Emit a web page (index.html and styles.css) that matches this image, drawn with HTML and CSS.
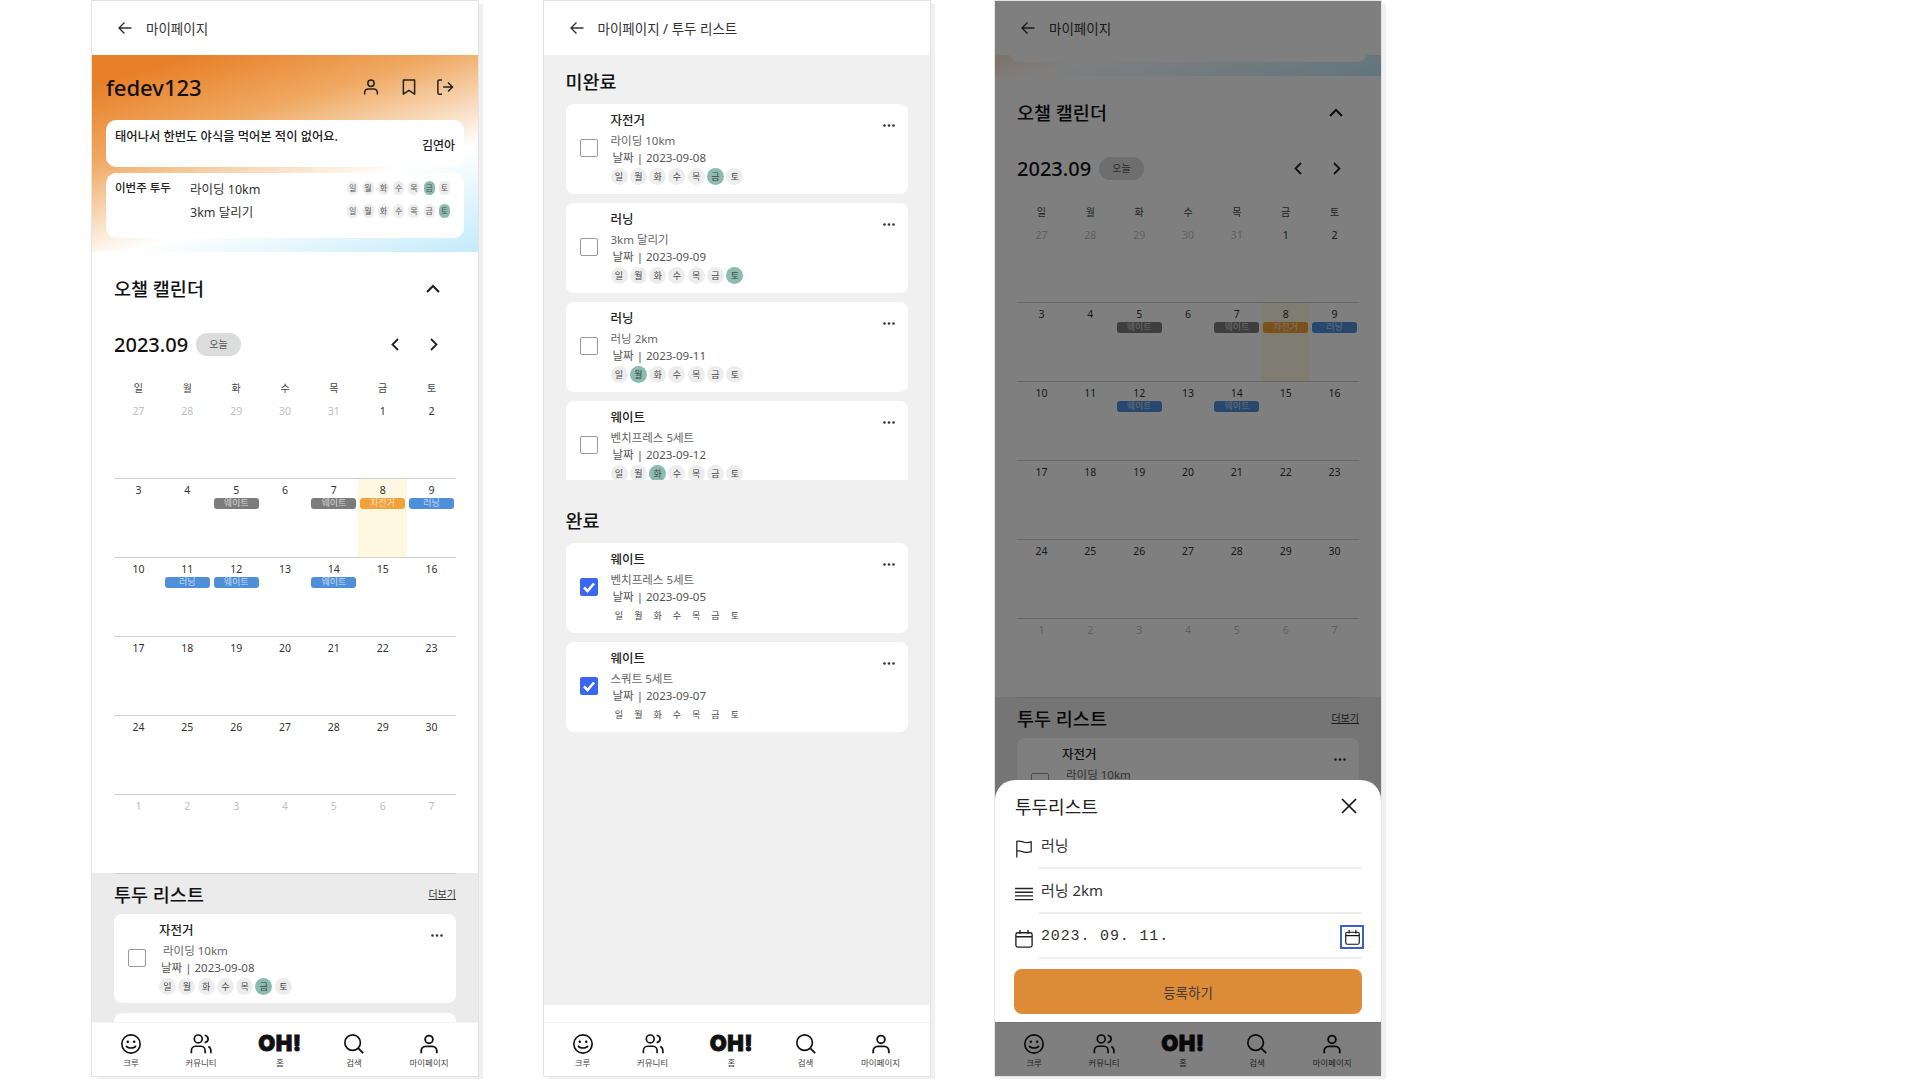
FILE: index.html
```html
<!DOCTYPE html>
<html lang="ko">
<head>
    <meta charset="UTF-8">
    <title>마이페이지</title>
    <link rel="stylesheet" href="styles.css">
    <style></style>
</head>
<body>
<svg class="sprite" width="0" height="0">
    <symbol id="i-back" viewBox="0 0 16 16"><path d="M14.5 8H2M7.5 2.5 2 8l5.5 5.5" fill="none" stroke="currentColor" stroke-width="1.4"/></symbol>
    <symbol id="i-user" viewBox="0 0 24 24"><circle cx="12" cy="7" r="4.2" fill="none" stroke="currentColor" stroke-width="2"/><path d="M3.5 22v-2.5c0-3 2.4-5 5-5h7c2.6 0 5 2 5 5V22" fill="none" stroke="currentColor" stroke-width="2"/></symbol>
    <symbol id="i-bookmark" viewBox="0 0 24 24"><path d="M4.5 2.5h15v19L12 16.5l-7.500 5z" fill="none" stroke="currentColor" stroke-width="2" stroke-linejoin="round"/></symbol>
    <symbol id="i-logout" viewBox="0 0 24 24"><path d="M8 2.500H4.500A2 2 0 0 0 2.500 4.500v15a2 2 0 0 0 2 2H8M9.500 12H22M16 6l6 6-6 6" fill="none" stroke="currentColor" stroke-width="2"/></symbol>
    <symbol id="i-up" viewBox="0 0 14 9"><path d="M1 8l6-6 6 6" fill="none" stroke="currentColor" stroke-width="2.200"/></symbol>
    <symbol id="i-prev" viewBox="0 0 8 13"><path d="M7 1 1.500 6.500 7 12" fill="none" stroke="currentColor" stroke-width="1.800"/></symbol>
    <symbol id="i-next" viewBox="0 0 8 13"><path d="M1 1l5.500 5.500L1 12" fill="none" stroke="currentColor" stroke-width="1.800"/></symbol>
    <symbol id="i-more" viewBox="0 0 12 3"><circle cx="1.500" cy="1.500" r="1.300"/><circle cx="6" cy="1.500" r="1.300"/><circle cx="10.500" cy="1.500" r="1.300"/></symbol>
    <symbol id="i-check" viewBox="0 0 18 18"><path d="M4 9.500l3.500 3.500L14 5.500" fill="none" stroke="#fff" stroke-width="2.600"/></symbol>
    <symbol id="i-smile" viewBox="0 0 24 24"><circle cx="12" cy="12" r="10" fill="none" stroke="currentColor" stroke-width="1.800"/><circle cx="8.500" cy="9.500" r="1.300"/><circle cx="15.500" cy="9.500" r="1.300"/><path d="M7 14.500c1.500 2.500 8.500 2.500 10 0" fill="none" stroke="currentColor" stroke-width="1.800" stroke-linecap="round"/></symbol>
    <symbol id="i-people" viewBox="0 0 24 24"><circle cx="9" cy="6.500" r="4.300" fill="none" stroke="currentColor" stroke-width="1.800"/><path d="M16 2.500c2.600.6 3.800 2.300 3.800 4s-1.200 3.400-3.800 4M1.500 22v-2.500c0-3 2-5 4.500-5h6c2.500 0 4.500 2 4.500 5V22M20 14.800c1.700.8 2.800 2.500 2.800 4.700V22" fill="none" stroke="currentColor" stroke-width="1.800"/></symbol>
    <symbol id="i-search" viewBox="0 0 24 24"><circle cx="10.500" cy="10.500" r="8.500" fill="none" stroke="currentColor" stroke-width="1.800"/><path d="M16.500 16.500 22 22" fill="none" stroke="currentColor" stroke-width="2"/></symbol>
    <symbol id="i-close" viewBox="0 0 16 16"><path d="M1 1l14 14M15 1 1 15" fill="none" stroke="currentColor" stroke-width="1.700"/></symbol>
    <symbol id="i-flag" viewBox="0 0 20 20"><path d="M2 19.500V1.500c3-1.200 5 .2 8 1 3 .8 5 .5 8-.5v11c-3 1-5 1.200-8 .4-3-.8-5-1.900-8-.9" fill="none" stroke="currentColor" stroke-width="1.400"/></symbol>
    <symbol id="i-lines" viewBox="0 0 18 14"><path d="M0 1.500h18M0 5.200h18M0 8.900h18M0 12.600h18" fill="none" stroke="currentColor" stroke-width="1.400"/></symbol>
    <symbol id="i-calendar" viewBox="0 0 20 20"><rect x="1" y="3" width="18" height="16" rx="2" fill="none" stroke="currentColor" stroke-width="1.500"/><path d="M1 7.500h18M5.500 0v4.500M14.500 0v4.500" fill="none" stroke="currentColor" stroke-width="1.500"/></symbol>
</svg>

<main class="page">

    <!-- 마이페이지 -->
    <section class="phone">
        <header class="topbar">
            <svg class="icon-back"><use href="#i-back"/></svg>
            <span>마이페이지</span>
        </header>
        <div class="scroll">
            <div class="profile">
                <div class="profile-top">
                    <h1>fedev123</h1>
                    <div class="profile-icons">
                        <svg class="icon-user"><use href="#i-user"/></svg>
                        <svg class="icon-mark"><use href="#i-bookmark"/></svg>
                        <svg class="icon-out"><use href="#i-logout"/></svg>
                    </div>
                </div>
                <div class="quote-card">
                    <p>태어나서 한번도 야식을 먹어본 적이 없어요.</p>
                    <span>김연아</span>
                </div>
                <div class="week-card">
                    <strong>이번주 투두</strong>
                    <div class="week-rows">
                        <div class="week-row"><span>라이딩 10km</span>
                            <div class="mini-days"><i>일</i><i>월</i><i>화</i><i>수</i><i>목</i><i class="on">금</i><i>토</i></div>
                        </div>
                        <div class="week-row"><span>3km 달리기</span>
                            <div class="mini-days"><i>일</i><i>월</i><i>화</i><i>수</i><i>목</i><i>금</i><i class="on">토</i></div>
                        </div>
                    </div>
                </div>
            </div>

            <div class="calendar">
                <div class="cal-title">
                    <h2>오챌 캘린더</h2>
                    <svg class="icon-up"><use href="#i-up"/></svg>
                </div>
                <div class="cal-month">
                    <strong>2023.09</strong>
                    <span class="today-pill">오늘</span>
                    <svg class="icon-prev"><use href="#i-prev"/></svg>
                    <svg class="icon-next"><use href="#i-next"/></svg>
                </div>
                <div class="cal-week"><span>일</span><span>월</span><span>화</span><span>수</span><span>목</span><span>금</span><span>토</span></div>
                <div class="cal-grid">
                    <div class="day dim">27</div><div class="day dim">28</div><div class="day dim">29</div><div class="day dim">30</div><div class="day dim">31</div><div class="day">1</div><div class="day">2</div>
                    <div class="day">3</div><div class="day">4</div><div class="day">5<b class="ev gray">웨이트</b></div><div class="day">6</div><div class="day">7<b class="ev gray">웨이트</b></div><div class="day today">8<b class="ev orange">자전거</b></div><div class="day">9<b class="ev blue">러닝</b></div>
                    <div class="day">10</div><div class="day">11<b class="ev blue">러닝</b></div><div class="day">12<b class="ev blue">웨이트</b></div><div class="day">13</div><div class="day">14<b class="ev blue">웨이트</b></div><div class="day">15</div><div class="day">16</div>
                    <div class="day">17</div><div class="day">18</div><div class="day">19</div><div class="day">20</div><div class="day">21</div><div class="day">22</div><div class="day">23</div>
                    <div class="day">24</div><div class="day">25</div><div class="day">26</div><div class="day">27</div><div class="day">28</div><div class="day">29</div><div class="day">30</div>
                    <div class="day dim">1</div><div class="day dim">2</div><div class="day dim">3</div><div class="day dim">4</div><div class="day dim">5</div><div class="day dim">6</div><div class="day dim">7</div>
                </div>
            </div>

            <div class="todo-preview">
                <div class="todo-head">
                    <h2>투두 리스트</h2>
                    <a href="#">더보기</a>
                </div>
                <div class="todo-card">
                    <span class="box"></span>
                    <div class="todo-body">
                        <h3>자전거</h3>
                        <p class="todo-desc indent">라이딩 10km</p>
                        <p class="todo-date">날짜 | 2023-09-08</p>
                        <div class="days"><i>일</i><i>월</i><i>화</i><i>수</i><i>목</i><i class="on">금</i><i>토</i></div>
                    </div>
                    <svg class="icon-more"><use href="#i-more"/></svg>
                </div>
                <div class="todo-card"></div>
            </div>
        </div>
        <nav class="tabbar">
            <a><svg><use href="#i-smile"/></svg>크루</a>
            <a><svg><use href="#i-people"/></svg>커뮤니티</a>
            <a><em>OH!</em>홈</a>
            <a><svg><use href="#i-search"/></svg>검색</a>
            <a><svg><use href="#i-user"/></svg>마이페이지</a>
        </nav>
    </section>

    <!-- 투두 리스트 -->
    <section class="phone phone-gray">
        <header class="topbar">
            <svg class="icon-back"><use href="#i-back"/></svg>
            <span>마이페이지 / 투두 리스트</span>
        </header>
        <div class="scroll list-page">
            <h2>미완료</h2>
            <div class="todo-list clipped">
                <div class="todo-card">
                    <span class="box"></span>
                    <div class="todo-body">
                        <h3>자전거</h3>
                        <p class="todo-desc">라이딩 10km</p>
                        <p class="todo-date">날짜 | 2023-09-08</p>
                        <div class="days"><i>일</i><i>월</i><i>화</i><i>수</i><i>목</i><i class="on">금</i><i>토</i></div>
                    </div>
                    <svg class="icon-more"><use href="#i-more"/></svg>
                </div>
                <div class="todo-card">
                    <span class="box"></span>
                    <div class="todo-body">
                        <h3>러닝</h3>
                        <p class="todo-desc">3km 달리기</p>
                        <p class="todo-date">날짜 | 2023-09-09</p>
                        <div class="days"><i>일</i><i>월</i><i>화</i><i>수</i><i>목</i><i>금</i><i class="on">토</i></div>
                    </div>
                    <svg class="icon-more"><use href="#i-more"/></svg>
                </div>
                <div class="todo-card">
                    <span class="box"></span>
                    <div class="todo-body">
                        <h3>러닝</h3>
                        <p class="todo-desc">러닝 2km</p>
                        <p class="todo-date">날짜 | 2023-09-11</p>
                        <div class="days"><i>일</i><i class="on">월</i><i>화</i><i>수</i><i>목</i><i>금</i><i>토</i></div>
                    </div>
                    <svg class="icon-more"><use href="#i-more"/></svg>
                </div>
                <div class="todo-card">
                    <span class="box"></span>
                    <div class="todo-body">
                        <h3>웨이트</h3>
                        <p class="todo-desc">벤치프레스 5세트</p>
                        <p class="todo-date">날짜 | 2023-09-12</p>
                        <div class="days"><i>일</i><i>월</i><i class="on">화</i><i>수</i><i>목</i><i>금</i><i>토</i></div>
                    </div>
                    <svg class="icon-more"><use href="#i-more"/></svg>
                </div>
            </div>
            <h2 class="done-title">완료</h2>
            <div class="todo-list">
                <div class="todo-card">
                    <span class="box checked"><svg><use href="#i-check"/></svg></span>
                    <div class="todo-body">
                        <h3>웨이트</h3>
                        <p class="todo-desc">벤치프레스 5세트</p>
                        <p class="todo-date">날짜 | 2023-09-05</p>
                        <div class="days plain"><i>일</i><i>월</i><i>화</i><i>수</i><i>목</i><i>금</i><i>토</i></div>
                    </div>
                    <svg class="icon-more"><use href="#i-more"/></svg>
                </div>
                <div class="todo-card">
                    <span class="box checked"><svg><use href="#i-check"/></svg></span>
                    <div class="todo-body">
                        <h3>웨이트</h3>
                        <p class="todo-desc">스쿼트 5세트</p>
                        <p class="todo-date">날짜 | 2023-09-07</p>
                        <div class="days plain"><i>일</i><i>월</i><i>화</i><i>수</i><i>목</i><i>금</i><i>토</i></div>
                    </div>
                    <svg class="icon-more"><use href="#i-more"/></svg>
                </div>
            </div>
        </div>
        <div class="tabbar-gap"></div>
        <nav class="tabbar">
            <a><svg><use href="#i-smile"/></svg>크루</a>
            <a><svg><use href="#i-people"/></svg>커뮤니티</a>
            <a><em>OH!</em>홈</a>
            <a><svg><use href="#i-search"/></svg>검색</a>
            <a><svg><use href="#i-user"/></svg>마이페이지</a>
        </nav>
    </section>

    <!-- 투두 등록 모달 -->
    <section class="phone">
        <header class="topbar">
            <svg class="icon-back"><use href="#i-back"/></svg>
            <span>마이페이지</span>
        </header>
        <div class="scroll">
            <div class="scrolled">
                <div class="profile">
                    <div class="profile-top">
                        <h1>fedev123</h1>
                    </div>
                    <div class="quote-card">
                        <p>태어나서 한번도 야식을 먹어본 적이 없어요.</p>
                        <span>김연아</span>
                    </div>
                    <div class="week-card"></div>
                </div>
                <div class="calendar">
                    <div class="cal-title">
                        <h2>오챌 캘린더</h2>
                        <svg class="icon-up"><use href="#i-up"/></svg>
                    </div>
                    <div class="cal-month">
                        <strong>2023.09</strong>
                        <span class="today-pill">오늘</span>
                        <svg class="icon-prev"><use href="#i-prev"/></svg>
                        <svg class="icon-next"><use href="#i-next"/></svg>
                    </div>
                    <div class="cal-week"><span>일</span><span>월</span><span>화</span><span>수</span><span>목</span><span>금</span><span>토</span></div>
                    <div class="cal-grid">
                        <div class="day dim">27</div><div class="day dim">28</div><div class="day dim">29</div><div class="day dim">30</div><div class="day dim">31</div><div class="day">1</div><div class="day">2</div>
                        <div class="day">3</div><div class="day">4</div><div class="day">5<b class="ev gray">웨이트</b></div><div class="day">6</div><div class="day">7<b class="ev gray">웨이트</b></div><div class="day today">8<b class="ev orange">자전거</b></div><div class="day">9<b class="ev blue">러닝</b></div>
                        <div class="day">10</div><div class="day">11</div><div class="day">12<b class="ev blue">웨이트</b></div><div class="day">13</div><div class="day">14<b class="ev blue">웨이트</b></div><div class="day">15</div><div class="day">16</div>
                        <div class="day">17</div><div class="day">18</div><div class="day">19</div><div class="day">20</div><div class="day">21</div><div class="day">22</div><div class="day">23</div>
                        <div class="day">24</div><div class="day">25</div><div class="day">26</div><div class="day">27</div><div class="day">28</div><div class="day">29</div><div class="day">30</div>
                        <div class="day dim">1</div><div class="day dim">2</div><div class="day dim">3</div><div class="day dim">4</div><div class="day dim">5</div><div class="day dim">6</div><div class="day dim">7</div>
                    </div>
                </div>
                <div class="todo-preview">
                    <div class="todo-head">
                        <h2>투두 리스트</h2>
                        <a href="#">더보기</a>
                    </div>
                    <div class="todo-card">
                        <span class="box"></span>
                        <div class="todo-body">
                            <h3>자전거</h3>
                            <p class="todo-desc indent">라이딩 10km</p>
                        </div>
                        <svg class="icon-more"><use href="#i-more"/></svg>
                    </div>
                </div>
            </div>
        </div>
        <nav class="tabbar">
            <a><svg><use href="#i-smile"/></svg>크루</a>
            <a><svg><use href="#i-people"/></svg>커뮤니티</a>
            <a><em>OH!</em>홈</a>
            <a><svg><use href="#i-search"/></svg>검색</a>
            <a><svg><use href="#i-user"/></svg>마이페이지</a>
        </nav>
        <div class="dim-layer"></div>
        <div class="modal">
            <div class="modal-head">
                <h2>투두리스트</h2>
                <svg class="icon-close"><use href="#i-close"/></svg>
            </div>
            <div class="field">
                <svg class="icon-flag"><use href="#i-flag"/></svg>
                <div class="field-value">러닝</div>
            </div>
            <div class="field">
                <svg class="icon-lines"><use href="#i-lines"/></svg>
                <div class="field-value">러닝 2km</div>
            </div>
            <div class="field">
                <svg class="icon-cal"><use href="#i-calendar"/></svg>
                <div class="field-value date-value">
                    <span>2023. 09. 11.</span>
                    <span class="cal-focus"><svg><use href="#i-calendar"/></svg></span>
                </div>
            </div>
            <button class="submit">등록하기</button>
        </div>
    </section>
</main>
</body>
</html>
```

FILE: styles.css
```css
* {
    box-sizing: border-box;
}

body {
    margin: 0;
    background-color: #fff;
    color: #222;
    font-family: "Noto Sans", "Noto Sans CJK KR", sans-serif;
    height: 1080px;
    overflow: hidden;
}

h1, h2, h3, p {
    margin: 0;
}

.sprite {
    position: absolute;
}

.page {
    display: flex;
    gap: 65.5px;
    padding: 1px 0 0 92px;
}

/* phone frame */
.phone {
    position: relative;
    display: flex;
    flex-direction: column;
    width: 386px;
    height: 1075px;
    overflow: hidden;
    background-color: #fff;
}

.page::before {
    content: none;
}

.phone {
    outline: 1px solid #e4e4e4;
    box-shadow: 5px 3px 0 #f0f0f0;
    overflow: clip;
    overflow-clip-margin: 0;
}

.phone-gray .scroll {
    background-color: #f0f0f0;
}

.topbar {
    display: flex;
    align-items: center;
    flex: none;
    height: 54px;
    padding: 0 0 1px 25px;
    background-color: #fff;
    font-size: 13.5px;
    color: #333;
    position: relative;
    z-index: 1;
}

.icon-back {
    width: 16px;
    height: 16px;
    margin-right: 13px;
}

.scroll {
    flex: 1;
    min-height: 0;
    overflow: hidden;
}

.scrolled {
    margin-top: -176px;
}

/* profile */
.profile {
    height: 197px;
    padding: 0 14px;
    background: linear-gradient(163deg, #e8802a 10%, #efa962 34%, #fff 66%, #c3ebfb 100%);
}

.profile-top {
    display: flex;
    align-items: center;
    justify-content: space-between;
    height: 65px;
    padding-bottom: 1px;
}

.profile-top h1 {
    font-size: 22px;
    font-weight: 500;
    color: #111;
}

.profile-icons {
    display: flex;
    align-items: center;
    color: #222;
    padding-right: 10px;
}

.profile-icons svg {
    width: 18px;
    height: 18px;
}

.icon-user {
    margin-right: 20px;
}

.icon-mark {
    margin-right: 18px;
}

.quote-card {
    display: flex;
    justify-content: space-between;
    height: 47px;
    padding: 7px 9px 0;
    background-color: #fff;
    border-radius: 10px;
    font-size: 12.3px;
    font-weight: 500;
    color: #222;
}

.quote-card span {
    font-size: 12px;
    padding-top: 9px;
}

.week-card {
    display: flex;
    height: 65px;
    margin-top: 6px;
    padding: 6px 14px 0 9px;
    background-color: #fff;
    border-radius: 10px;
}

.week-card strong {
    width: 75px;
    font-size: 11.5px;
    font-weight: 500;
    line-height: 18px;
}

.week-rows {
    flex: 1;
    display: flex;
    flex-direction: column;
    gap: 5px;
}

.week-row {
    display: flex;
    align-items: center;
    justify-content: space-between;
    height: 18px;
    font-size: 12.5px;
    color: #333;
}

.mini-days {
    display: flex;
    gap: 4.3px;
}

.mini-days i {
    width: 11px;
    height: 14px;
    border-radius: 6px;
    background-color: #ededed;
    font-size: 8px;
    font-style: normal;
    line-height: 14px;
    text-align: center;
    color: #555;
}

.mini-days i.on {
    background-color: #8cbcb0;
}

/* calendar */
.calendar {
    padding: 0 22px 13px;
    height: 621px;
}

.cal-title {
    display: flex;
    align-items: center;
    justify-content: space-between;
    height: 28px;
    margin-top: 0;
    position: relative;
    top: 22px;
}

.cal-title h2, .todo-head h2, .list-page h2 {
    font-size: 18.5px;
    font-weight: 500;
    color: #111;
}

.icon-up {
    width: 14px;
    height: 9px;
    margin-right: 16px;
    color: #222;
}

.cal-month {
    display: flex;
    align-items: center;
    height: 28px;
    margin-top: 36px;
    padding-top: 36px;
    height: 64px;
    margin-top: 14px;
    padding-top: 36px;
}

.cal-month strong {
    width: 82px;
    font-size: 20px;
    font-weight: 500;
    color: #111;
}

.today-pill {
    width: 45px;
    height: 23px;
    border-radius: 12px;
    background-color: #dcdcdc;
    font-size: 10px;
    line-height: 22px;
    text-align: center;
    color: #555;
}

.icon-prev, .icon-next {
    width: 8px;
    height: 13px;
    color: #222;
}

.icon-prev {
    margin-left: 150px;
}

.icon-next {
    margin-left: 31px;
}

.cal-week {
    display: grid;
    grid-template-columns: repeat(7, 1fr);
    height: 16px;
    margin-top: 22px;
    font-size: 10px;
    line-height: 16px;
    text-align: center;
    color: #444;
}

.cal-grid {
    display: grid;
    grid-template-columns: repeat(7, 1fr);
    margin-top: 4px;
}

.day {
    height: 79px;
    padding-top: 3px;
    border-bottom: 1.5px solid #d0d0d0;
    font-size: 10.5px;
    line-height: 16px;
    text-align: center;
    color: #333;
}

.day.dim {
    color: #c0c0c0;
}

.day.today {
    background-color: #fef8e3;
}

.ev {
    display: block;
    width: 45px;
    height: 11px;
    margin: 0 auto;
    border-radius: 3px;
    font-size: 9px;
    font-weight: 400;
    line-height: 9px;
    color: rgba(255, 255, 255, 0.7);
}

.ev.gray {
    background-color: #7c7c7c;
}

.ev.orange {
    background-color: #f2a23a;
}

.ev.blue {
    background-color: #4f8fd8;
}

/* todo */
.todo-preview {
    height: 200px;
    padding: 0 22px;
    background-color: #ebebeb;
}

.todo-head {
    display: flex;
    align-items: center;
    justify-content: space-between;
    height: 41px;
}

.todo-head a {
    font-size: 10px;
    color: #333;
}

.todo-card {
    display: flex;
    height: 89px;
    margin-bottom: 9.500px;
    background-color: #fff;
    border-radius: 8px;
}

.box {
    flex: none;
    width: 18px;
    height: 18px;
    margin: 35px 13px 0 14px;
    border: 1.5px solid #999;
    border-radius: 2px;
}

.box.checked {
    background-color: #3b66f0;
    border: none;
}

.box.checked svg {
    display: block;
    width: 18px;
    height: 18px;
}

.todo-body {
    flex: 1;
    padding-top: 9px;
}

.todo-body h3 {
    font-size: 12.5px;
    font-weight: 500;
    line-height: 16px;
    color: #222;
}

.todo-desc {
    margin-top: 4px;
    font-size: 11.5px;
    line-height: 16px;
    color: #666;
}

.todo-desc.indent {
    padding-left: 4px;
}

.todo-date {
    margin-top: 1px;
    padding-left: 2px;
    font-size: 11.5px;
    line-height: 16px;
    color: #555;
}

.days {
    display: flex;
    gap: 2.3px;
    margin-top: 2px;
}

.days i {
    width: 17px;
    height: 17px;
    border-radius: 50%;
    background-color: #ededed;
    font-size: 9px;
    font-style: normal;
    line-height: 17px;
    text-align: center;
    color: #444;
}

.days i.on {
    background-color: #8cbcb0;
}

.days.plain i {
    background-color: transparent;
}

.icon-more {
    flex: none;
    width: 12px;
    height: 3px;
    margin: 20px 13px 0 0;
    fill: #333;
}

/* list page */
.list-page {
    padding: 0 22px;
}

.list-page h2 {
    height: 49px;
    padding-top: 13px;
    line-height: 28px;
}

.list-page h2.done-title {
    height: 63px;
    padding-top: 27px;
}

.todo-list .todo-card {
    height: 89.500px;
}

.todo-list.clipped {
    height: 376px;
    overflow: hidden;
}

.tabbar-gap {
    flex: none;
    height: 17px;
    background-color: #fff;
}

/* bottom nav */
.tabbar {
    display: grid;
    grid-template-columns: 78px 62px 96px 52px 98px;
    flex: none;
    height: 54px;
    padding-top: 10px;
    background-color: #fff;
    border-top: 1px solid #f5f5f5;
}

.tabbar a {
    display: flex;
    flex-direction: column;
    align-items: center;
    font-size: 8.5px;
    line-height: 12px;
    color: #444;
}

.tabbar svg {
    width: 22px;
    height: 22px;
    color: #111;
    margin-bottom: 2px;
}

.tabbar em {
    height: 22px;
    margin-bottom: 2px;
    font-family: Inter, sans-serif;
    font-size: 22px;
    font-style: normal;
    font-weight: 900;
    line-height: 20px;
    letter-spacing: 0.5px;
    color: #111;
    -webkit-text-stroke: 0.8px #111;
}

/* modal */
.dim-layer {
    position: absolute;
    inset: 0;
    background-color: rgba(0, 0, 0, 0.5);
    z-index: 2;
}

.modal {
    position: absolute;
    left: 0;
    right: 0;
    bottom: 54px;
    z-index: 3;
    height: 242px;
    padding: 0 19px;
    background-color: #fff;
    border-radius: 20px 20px 0 0;
}

.modal-head {
    display: flex;
    align-items: center;
    justify-content: space-between;
    height: 44px;
    padding: 8px 5px 0 1px;
}

.modal-head h2 {
    font-size: 18px;
    font-weight: 400;
    color: #222;
}

.icon-close {
    width: 16px;
    height: 16px;
    color: #111;
}

.field {
    display: flex;
    align-items: center;
    height: 45px;
    color: #222;
}

.field > svg {
    flex: none;
    width: 18px;
    height: 20px;
    margin: 4px 6px 0 1px;
}

.field-value {
    flex: 1;
    height: 45px;
    padding: 9px 0 0 2px;
    border-bottom: 2px solid #eee;
    font-size: 15px;
    line-height: 24px;
    color: #333;
}

.date-value {
    display: flex;
    justify-content: space-between;
    padding-top: 11px;
    font-family: "Liberation Mono", monospace;
    font-size: 15px;
    letter-spacing: 0.85px;
}

.cal-focus {
    display: flex;
    align-items: center;
    justify-content: center;
    width: 20px;
    height: 20px;
    margin-top: 2px;
    outline: 2px solid #3b5fc8;
}

.cal-focus svg {
    width: 15px;
    height: 15px;
    color: #111;
}

.submit {
    display: block;
    width: 100%;
    height: 45px;
    margin-top: 10px;
    background-color: #dd8b37;
    border: none;
    border-radius: 8px;
    font-family: inherit;
    font-size: 13.5px;
    color: #3c3c3c;
}
```
